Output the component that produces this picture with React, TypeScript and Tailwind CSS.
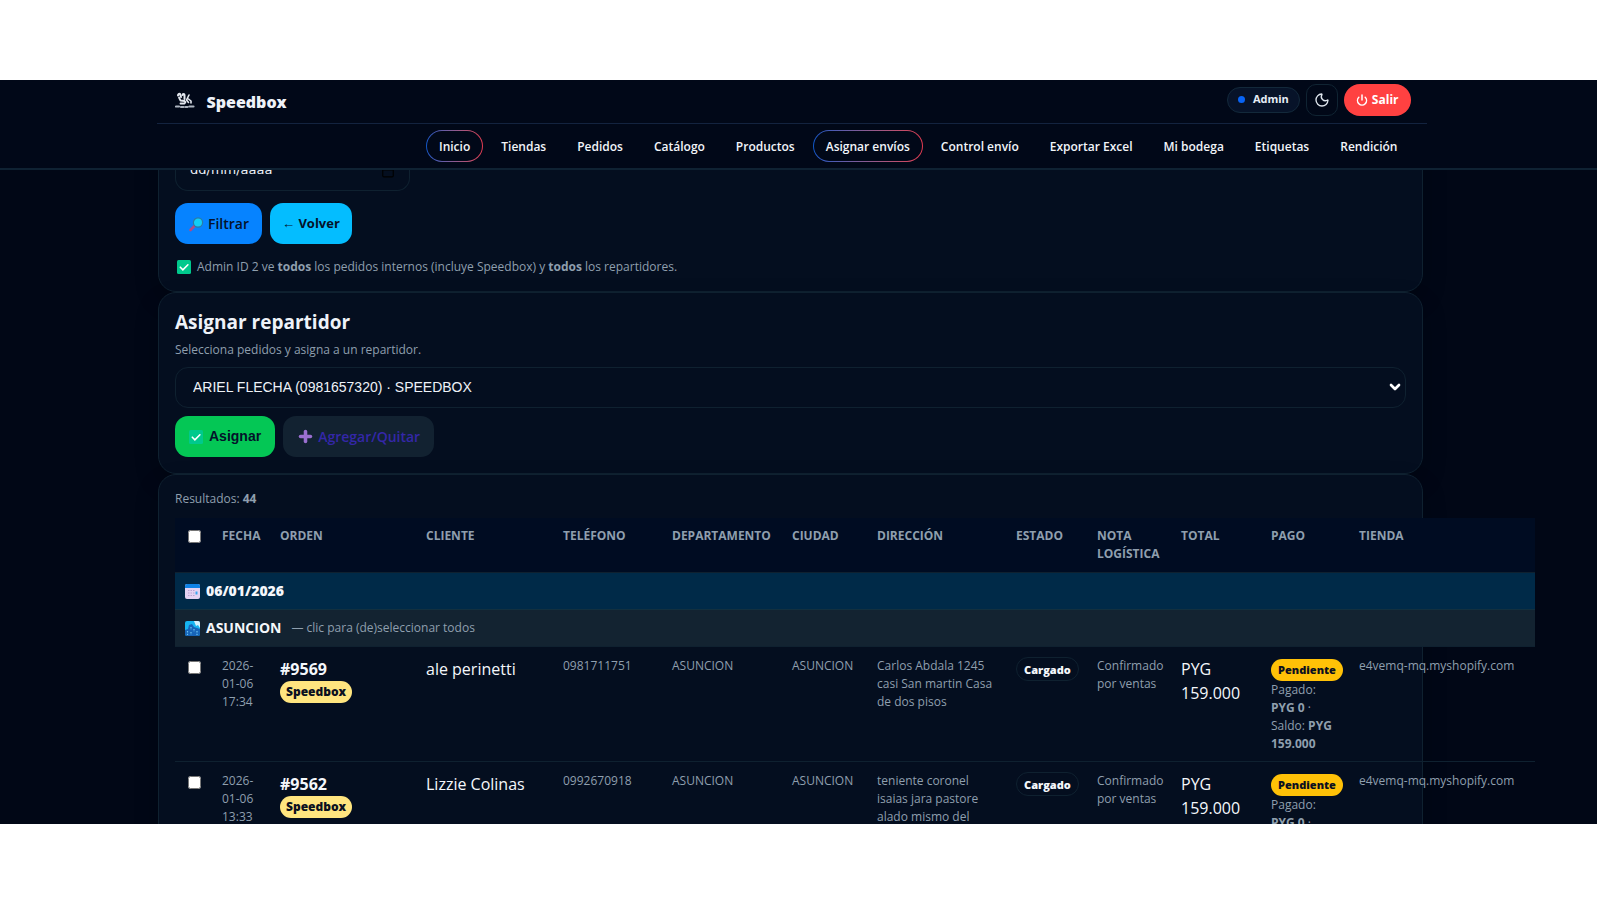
import React from 'react';
import { Moon, Power, Plus, Calendar, ChevronDown } from 'lucide-react';

const navItems = [
  'Inicio', 'Tiendas', 'Pedidos', 'Catálogo', 'Productos', 'Asignar envíos',
  'Control envío', 'Exportar Excel', 'Mi bodega', 'Etiquetas', 'Rendición',
];
const activeItems = ['Inicio', 'Asignar envíos'];

const columns = [
  { label: 'FECHA', width: 'w-[58px]' },
  { label: 'ORDEN', width: 'w-[146px]' },
  { label: 'CLIENTE', width: 'w-[137px]' },
  { label: 'TELÉFONO', width: 'w-[109px]' },
  { label: 'DEPARTAMENTO', width: 'w-[120px]' },
  { label: 'CIUDAD', width: 'w-[85px]' },
  { label: 'DIRECCIÓN', width: 'w-[139px]' },
  { label: 'ESTADO', width: 'w-[81px]' },
  { label: 'NOTA LOGÍSTICA', width: 'w-[84px]' },
  { label: 'TOTAL', width: 'w-[90px]' },
  { label: 'PAGO', width: 'w-[88px]' },
  { label: 'TIENDA', width: 'w-[184px]' },
];

interface Pedido {
  fecha: string;
  hora: string;
  orden: string;
  cliente: string;
  telefono: string;
  direccion: string[];
}

const pedidos: Pedido[] = [
  {
    fecha: '2026-01-06',
    hora: '17:34',
    orden: '#9569',
    cliente: 'ale perinetti',
    telefono: '0981711751',
    direccion: ['Carlos Abdala 1245', 'casi San martin Casa', 'de dos pisos'],
  },
  {
    fecha: '2026-01-06',
    hora: '13:33',
    orden: '#9562',
    cliente: 'Lizzie Colinas',
    telefono: '0992670918',
    direccion: ['teniente coronel', 'isaias jara pastore', 'alado mismo del'],
  },
];

const SpeedboxLogo = () => (
  <svg className="h-5 w-5" viewBox="0 0 20 20" fill="none" stroke="#e5e9f0" strokeLinecap="round" strokeLinejoin="round">
    <path d="M3 3.500c0-1.500 1-2 2-1.500l1 3M7.500 3c0-1.500 2-1.500 2 0v4" strokeWidth="2" />
    <path d="M4 5.500l1.500 3 4 .5M5.500 11.500h4l1-1.500" strokeWidth="1.800" />
    <path d="M14 3l-2.500 5 2 2.500M13.500 7l2.500 2v2" strokeWidth="1.600" />
    <path d="M1 14.500h3M6 15h2.500M10.500 15h2M14.500 14.500h4" stroke="#aeb5c0" strokeWidth="2.200" />
  </svg>
);

const CheckEmoji = () => (
  <svg className="h-3.5 w-3.5 shrink-0" viewBox="0 0 14 14">
    <rect width="14" height="14" rx="1.500" fill="#00c98d" />
    <path d="M3.300 7.200l2.600 2.600 5-5" fill="none" stroke="#fff" strokeWidth="1.600" strokeLinecap="round" />
  </svg>
);

const SearchEmoji = () => (
  <svg className="h-4 w-4 shrink-0" viewBox="0 0 16 16">
    <path d="M2.500 14l4-4" stroke="#b04a86" strokeWidth="2.600" strokeLinecap="round" />
    <circle cx="10" cy="6.500" r="4.600" fill="#12cdf5" stroke="#2b7ba5" strokeWidth="1.200" />
  </svg>
);

const CalendarEmoji = () => (
  <svg className="h-[15px] w-[15px] shrink-0" viewBox="0 0 15 15">
    <rect width="15" height="15" rx="2" fill="#e3d3f3" />
    <path d="M0 4V2a2 2 0 012-2h11a2 2 0 012 2v2z" fill="#0f83e6" />
    <path d="M3 6.500h7M3 9h7M3 11.500h7" stroke="#b7a2d2" strokeWidth="1.200" strokeDasharray="1.500 1" />
    <path d="M11.500 7.500v3" stroke="#3aa5f0" strokeWidth="2" />
  </svg>
);

const CityEmoji = () => (
  <svg className="h-[15px] w-[15px] shrink-0" viewBox="0 0 15 15">
    <rect width="15" height="15" rx="2" fill="#16b4f0" />
    <path d="M9 0h4a2 2 0 012 2v5l-2-3-2 1z" fill="#d6f0fb" />
    <path d="M0 9l3-1 1-4 3-1 2 3 3 1 3 1v5a2 2 0 01-2 2H2a2 2 0 01-2-2z" fill="#1764b8" />
    <path d="M2.500 10v4M6 6v3M6 11v3M9 8v3M12 10v4" stroke="#6cc4f2" strokeWidth="1.200" strokeDasharray="1.500 1.200" />
  </svg>
);

const Header = () => (
  <header className="relative z-10 border-b-2 border-[#0f2233] bg-[#010818] pr-3.5">
    <div className="mx-auto w-[1270px] max-w-full">
      <div className="flex h-11 items-center justify-between border-b border-[#13233f] pl-[18px] pr-4">
        <div className="flex items-center gap-3">
          <SpeedboxLogo />
          <span className="text-[16px] font-extrabold text-[#eef2f8]">Speedbox</span>
        </div>
        <div className="flex items-center gap-1.5 pb-1">
          <span className="flex h-[26px] items-center gap-2 rounded-full border border-[#13293b] bg-[#071329] px-2.5 text-[11px] font-bold text-[#e6edf6]">
            <span className="h-[7px] w-[7px] rounded-full bg-[#0864f5]" />
            Admin
          </span>
          <button type="button" aria-label="Cambiar tema" className="flex h-8 w-8 items-center justify-center rounded-[10px] border border-[#102433] text-[#dfe6ee]">
            <Moon size={16} strokeWidth={2} />
          </button>
          <button type="button" className="flex h-8 items-center gap-1 rounded-full bg-[#ff4141] px-3 text-[12px] font-bold text-white">
            <Power size={12} strokeWidth={3} />
            Salir
          </button>
        </div>
      </div>
      <nav className="flex h-11 items-center justify-end gap-[5px] pr-4 pb-px">
        {navItems.map((item) =>
          activeItems.includes(item) ? (
            <a key={item} href="#" className="rounded-full bg-linear-to-r from-[#0b55c4] to-[#e0394f] p-px">
              <span className="block rounded-full bg-[#010818] px-3 pt-[7px] pb-[5px] text-[12px] leading-[18px] font-semibold whitespace-nowrap text-[#f2f5fa]">
                {item}
              </span>
            </a>
          ) : (
            <a key={item} href="#" className="px-[13px] pt-[7px] pb-[5px] text-[12px] leading-[18px] font-semibold whitespace-nowrap text-[#f2f5fa]">
              {item}
            </a>
          )
        )}
      </nav>
    </div>
  </header>
);

const Card: React.FC<{ className?: string; children: React.ReactNode }> = ({ className = '', children }) => (
  <section className={`rounded-[18px] border border-[#0f2130] bg-[#040e1f] px-4 shadow-[0_10px_24px_rgba(0,0,0,0.2)] ${className}`}>
    {children}
  </section>
);

const Filtros = () => (
  <Card className="-mt-10 pb-[15px]">
    <div className="flex h-[60px] w-[235px] items-end justify-between rounded-b-[13px] border border-t-0 border-[#0f2130] px-3.5 pb-2.5">
      <input
        type="text"
        aria-label="Hasta"
        placeholder="dd/mm/aaaa"
        className="w-28 bg-transparent font-['DejaVu_Sans','Liberation_Sans',sans-serif] text-[13px] leading-5 outline-none placeholder:text-[#eef2f8]"
      />
      <Calendar size={14} strokeWidth={2} className="mb-0.5 text-black" />
    </div>
    <div className="mt-3 flex gap-2">
      <button type="button" className="flex h-[41px] items-center gap-1 rounded-[13px] bg-[#0683ff] px-[13px] text-[14px] font-semibold text-[#04122a]">
        <SearchEmoji />
        Filtrar
      </button>
      <a href="#" className="flex h-[41px] items-center rounded-[13px] bg-[#04bdff] px-3 text-[13px] font-bold text-[#04122a]">
        ← Volver
      </a>
    </div>
    <p className="mt-3.5 flex items-center gap-1.5 pl-0.5 text-[12px] leading-[18px] text-[#8f9fae]">
      <CheckEmoji />
      <span>
        Admin ID 2 ve <b>todos</b> los pedidos internos (incluye Speedbox) y <b>todos</b> los repartidores.
      </span>
    </p>
  </Card>
);

const AsignarRepartidor = () => (
  <Card className="pt-3.5 pb-4">
    <h2 className="text-[19px] leading-[30px] font-bold text-[#eef2f8]">Asignar repartidor</h2>
    <p className="mt-1 text-[12px] leading-[18px] text-[#8f9fae]">Selecciona pedidos y asigna a un repartidor.</p>
    <div className="relative mt-2">
      <select
        aria-label="Repartidor"
        className="h-[41px] w-full appearance-none rounded-[13px] border border-[#0f2130] bg-[#040e1f] px-[17px] font-['Liberation_Sans',Arial,sans-serif] text-[14px] text-[#eef2f8]"
      >
        <option>ARIEL FLECHA (0981657320) · SPEEDBOX</option>
      </select>
      <ChevronDown size={16} strokeWidth={4} className="pointer-events-none absolute top-3 right-[3px] text-white" />
    </div>
    <div className="mt-2 flex gap-2">
      <button type="button" className="flex h-[41px] items-center gap-1.5 rounded-[13px] bg-[#04c755] px-3.5 font-['Liberation_Sans',Arial,sans-serif] text-[14px] font-bold text-[#04122a]">
        <CheckEmoji />
        Asignar
      </button>
      <a href="#" className="flex h-[41px] items-center gap-1 rounded-[13px] bg-[#122231] px-3.5 text-[14px] font-semibold text-[#3427a8]">
        <Plus size={17} strokeWidth={5} className="text-[#9a6fd0]" />
        Agregar/Quitar
      </a>
    </div>
  </Card>
);

const cell = 'px-2 pt-2.5 pb-2';
const small = 'text-[12px] leading-[18px] text-[#8f9fae]';

const PedidoRow: React.FC<{ pedido: Pedido }> = ({ pedido }) => (
  <tr className="border-b border-[#0f2130] align-top">
    <td className="px-[13px] pt-3.5">
      <input type="checkbox" aria-label={`Seleccionar ${pedido.orden}`} className="block h-[13px] w-[13px]" />
    </td>
    <td className={`${cell} ${small}`}>{pedido.fecha} {pedido.hora}</td>
    <td className={cell}>
      <div className="text-[16px] leading-6 font-bold">{pedido.orden}</div>
      <div className="w-fit rounded-full bg-[#ffe57f] px-1.5 text-[12px] leading-[22px] font-extrabold text-[#0b1020]">Speedbox</div>
    </td>
    <td className={`${cell} text-[16px] leading-6`}>{pedido.cliente}</td>
    <td className={`${cell} ${small}`}>{pedido.telefono}</td>
    <td className={`${cell} ${small}`}>ASUNCION</td>
    <td className={`${cell} ${small}`}>ASUNCION</td>
    <td className={`${cell} ${small} whitespace-nowrap`}>
      {pedido.direccion.map((linea) => (
        <div key={linea}>{linea}</div>
      ))}
    </td>
    <td className={cell}>
      <div className="w-fit rounded-full border border-[#0f2130] px-[7px] pt-0.5 text-[11px] leading-5 font-extrabold">Cargado</div>
    </td>
    <td className={`${cell} ${small}`}>Confirmado por ventas</td>
    <td className={`${cell} text-[16px] leading-6`}>PYG 159.000</td>
    <td className={`px-2 pt-3 pb-2 whitespace-nowrap ${small}`}>
      <div className="rounded-full bg-[#ffc107] text-center text-[11px] leading-[22px] font-extrabold text-[#0b1020]">Pendiente</div>
      <div>Pagado:</div>
      <div><b>PYG 0</b> ·</div>
      <div>Saldo: <b>PYG</b></div>
      <div><b>159.000</b></div>
    </td>
    <td className={`${cell} ${small}`}>e4vemq-mq.myshopify.com</td>
  </tr>
);

const Resultados = () => (
  <Card className="pt-[15px]">
    <p className="text-[12px] leading-[18px] text-[#8f9fae]">
      Resultados: <b>44</b>
    </p>
    <table className="mt-2.5 w-[1360px] table-fixed border-collapse text-left text-[#f4f7fb]">
      <thead>
        <tr className="border-b border-[#0f2130] bg-[#000c22] align-top">
          <th className="w-[39px] px-[13px] pt-3">
            <input type="checkbox" aria-label="Seleccionar todos" className="block h-[13px] w-[13px]" />
          </th>
          {columns.map((col) => (
            <th key={col.label} className={`${col.width} px-2 py-[9px] text-[12px] leading-[18px] font-bold text-[#8f9fae]`}>
              {col.label}
            </th>
          ))}
        </tr>
      </thead>
      <tbody>
        <tr className="border-b border-[#12303f] bg-[#002a48]">
          <td colSpan={13} className="px-2.5 py-1.5">
            <div className="flex items-center gap-1.5 text-[14px] leading-6 font-extrabold">
              <CalendarEmoji />
              06/01/2026
            </div>
          </td>
        </tr>
        <tr className="border-b border-[#0f2130] bg-[#132331]">
          <td colSpan={13} className="px-2.5 py-1.5">
            <div className="flex items-center gap-1.5 text-[14px] leading-6 font-bold">
              <CityEmoji />
              ASUNCION
              <span className="ml-1 text-[12px] font-normal text-[#8f9fae]">— clic para (de)seleccionar todos</span>
            </div>
          </td>
        </tr>
        {pedidos.map((pedido) => (
          <PedidoRow key={pedido.orden} pedido={pedido} />
        ))}
      </tbody>
    </table>
  </Card>
);

function App() {
  return (
    <div className="flex h-screen flex-col bg-white pt-20 pr-[3px] pb-[76px] font-['Open_Sans','Noto_Sans',sans-serif]">
      <div className="min-h-0 flex-1 overflow-hidden bg-[#010716]">
        <Header />
        <main className="pr-4">
          <div className="mx-auto w-[1265px] max-w-full">
            <Filtros />
            <AsignarRepartidor />
            <Resultados />
          </div>
        </main>
      </div>
    </div>
  );
}

export default App;
